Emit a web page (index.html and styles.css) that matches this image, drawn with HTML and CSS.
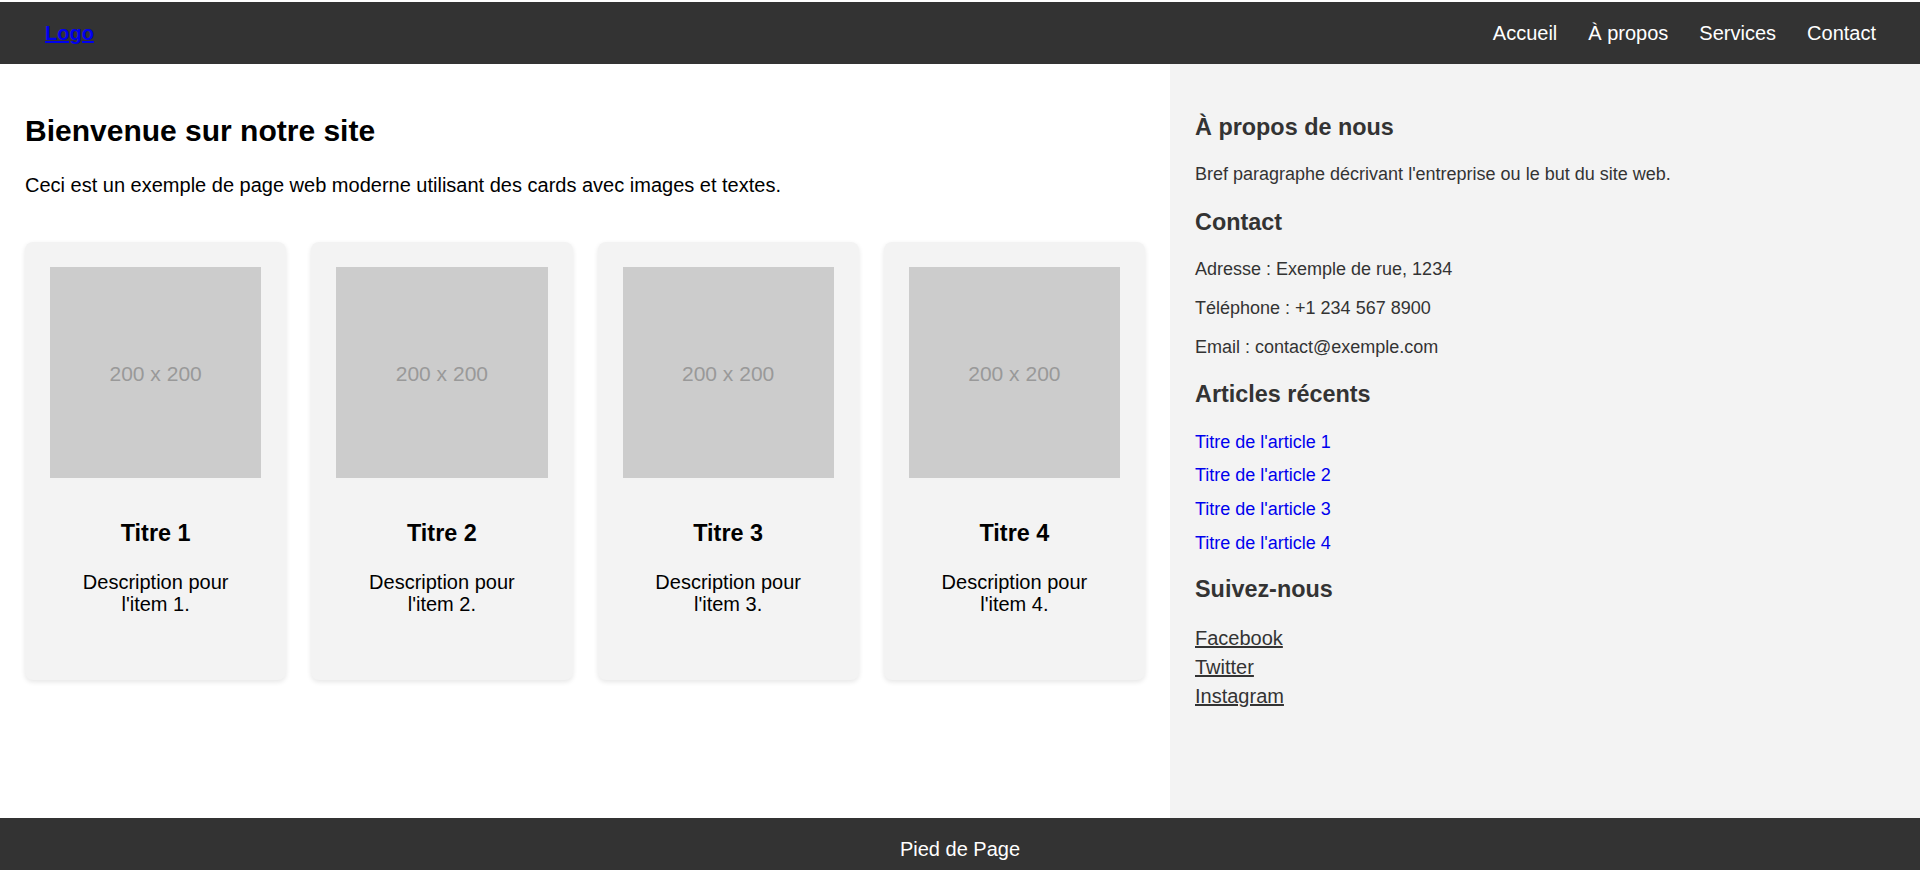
FILE: index.html
```html
<!DOCTYPE html>
<html lang="fr">
<head>
<meta charset="utf-8">
<title>Bienvenue sur notre site</title>
<link rel="stylesheet" href="styles.css">
</head>
<body>
<header class="site-header">
  <a href="#" class="logo">Logo</a>
  <nav class="main-nav">
    <ul>
      <li><a href="#">Accueil</a></li>
      <li><a href="#">À propos</a></li>
      <li><a href="#">Services</a></li>
      <li><a href="#">Contact</a></li>
    </ul>
  </nav>
</header>
<div class="layout">
  <main class="content">
    <h2 class="page-title">Bienvenue sur notre site</h2>
    <p class="intro">Ceci est un exemple de page web moderne utilisant des cards avec images et textes.</p>
    <div class="cards">
      <article class="card">
        <div class="card-img"><span>200 x 200</span></div>
        <div class="card-body">
          <h3>Titre 1</h3>
          <p>Description pour l'item 1.</p>
        </div>
      </article>
      <article class="card">
        <div class="card-img"><span>200 x 200</span></div>
        <div class="card-body">
          <h3>Titre 2</h3>
          <p>Description pour l'item 2.</p>
        </div>
      </article>
      <article class="card">
        <div class="card-img"><span>200 x 200</span></div>
        <div class="card-body">
          <h3>Titre 3</h3>
          <p>Description pour l'item 3.</p>
        </div>
      </article>
      <article class="card">
        <div class="card-img"><span>200 x 200</span></div>
        <div class="card-body">
          <h3>Titre 4</h3>
          <p>Description pour l'item 4.</p>
        </div>
      </article>
    </div>
  </main>
  <aside class="sidebar">
    <h3>À propos de nous</h3>
    <p>Bref paragraphe décrivant l'entreprise ou le but du site web.</p>
    <h3>Contact</h3>
    <p>Adresse : Exemple de rue, 1234</p>
    <p>Téléphone : +1 234 567 8900</p>
    <p>Email : contact@exemple.com</p>
    <h3>Articles récents</h3>
    <ul class="articles">
      <li><a href="#">Titre de l'article 1</a></li>
      <li><a href="#">Titre de l'article 2</a></li>
      <li><a href="#">Titre de l'article 3</a></li>
      <li><a href="#">Titre de l'article 4</a></li>
    </ul>
    <h3 class="follow-title">Suivez-nous</h3>
    <ul class="social">
      <li><a href="#">Facebook</a></li>
      <li><a href="#">Twitter</a></li>
      <li><a href="#">Instagram</a></li>
    </ul>
  </aside>
</div>
<footer class="site-footer">Pied de Page</footer>
</body>
</html>
```

FILE: styles.css
```css
html, body {
  margin: 0;
}

body {
  padding-top: 2px;
  font-family: "Liberation Sans", Arial, sans-serif;
  font-size: 20px;
  color: #000;
  background: #fff;
}

.site-header {
  height: 62px;
  background: #333;
  display: flex;
  align-items: center;
  justify-content: space-between;
  padding: 0 44px 0 45px;
}

.logo {
  color: #0000ee;
  font-weight: bold;
  font-size: 20px;
  text-decoration: underline;
}

.main-nav ul {
  list-style: none;
  margin: 0;
  padding: 0;
  display: flex;
  gap: 31px;
}

.main-nav a {
  color: #fff;
  text-decoration: none;
  font-size: 20px;
}

.layout {
  display: grid;
  grid-template-columns: 1170px 1fr;
  min-height: 754px;
}

.content {
  padding: 25px;
}

.page-title {
  font-size: 30px;
  margin: 24.9px 0 25.9px;
}

.intro {
  margin: 20px 0 19px;
}

.cards {
  display: flex;
  gap: 25px;
  padding-top: 26px;
}

.card {
  flex: 1;
  background: #f3f3f3;
  border-radius: 8px;
  padding: 25px;
  box-shadow: 0 2px 5px rgba(0, 0, 0, 0.1);
  text-align: center;
}

.card-img {
  aspect-ratio: 1 / 1;
  background: #ccc;
  display: flex;
  align-items: center;
  justify-content: center;
  color: #999;
  font-size: 21px;
  padding-top: 4px;
  box-sizing: border-box;
}

.card-body {
  padding: 19px 12px 20px;
}

.card-body h3 {
  font-size: 23.4px;
  margin: 23.4px 0 23.8px;
}

.card-body p {
  line-height: 22px;
  margin: 20px 0;
}

.sidebar {
  background: #f3f3f3;
  padding: 26.5px 25px 25px;
  color: #333;
}

.sidebar h3 {
  font-size: 23.4px;
  margin: 23.4px 0;
}

.sidebar p {
  font-size: 18px;
  margin: 18px 0;
}

.articles {
  list-style: none;
  padding: 0;
  margin: 18px 0;
  font-size: 18px;
}

.articles li {
  margin-bottom: 12.6px;
}

.articles a {
  color: #0000ee;
  text-decoration: none;
}

.sidebar .follow-title {
  margin-top: 22px;
}

.social {
  list-style: none;
  padding: 0;
  margin: 20px 0;
  font-size: 20px;
}

.sidebar .follow-title + .social {
  padding-top: 1px;
}

.social li {
  margin-bottom: 6px;
}

.social a {
  color: #333;
  text-decoration: underline;
}

.site-footer {
  background: #333;
  color: #fff;
  text-align: center;
  padding: 20px;
}
```
